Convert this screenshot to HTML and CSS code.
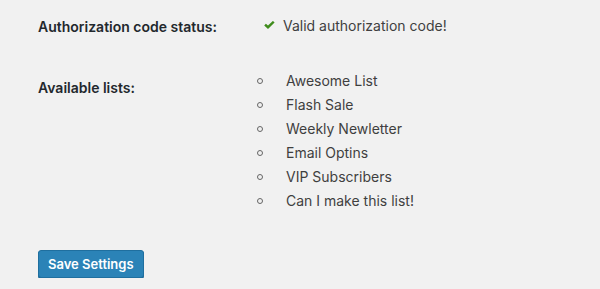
FILE: index.html
```html
<!DOCTYPE html>
<html lang="en">
<head>
<meta charset="utf-8">
<title>Settings</title>
<link rel="stylesheet" href="styles.css">
</head>
<body>
<div class="wrap">
  <div class="row row-status">
    <div class="label">Authorization code status:</div>
    <div class="value status">
      <svg class="check" width="11" height="8" viewBox="0 0 11 8" aria-hidden="true"><path d="M0.2 4.4 L1.9 2.7 L4 4.6 L8.9 -0.1 L10.6 1.6 L4 8 Z" fill="#3f8c1c"/></svg>
      <span>Valid authorization code!</span>
    </div>
  </div>
  <div class="row row-lists">
    <div class="label">Available lists:</div>
    <ul class="value lists">
      <li>Awesome List</li>
      <li>Flash Sale</li>
      <li>Weekly Newletter</li>
      <li>Email Optins</li>
      <li>VIP Subscribers</li>
      <li>Can I make this list!</li>
    </ul>
  </div>
  <div class="actions">
    <button class="button-primary" type="button">Save Settings</button>
  </div>
</div>
</body>
</html>
```

FILE: styles.css
```css
html, body {
  margin: 0;
  padding: 0;
  background: #f1f1f1;
}
body {
  font-family: Inter, "Noto Sans", "Liberation Sans", sans-serif;
  font-size: 14px;
  color: #3f3f3f;
}
.wrap {
  padding-left: 38px;
}
.row {
  display: grid;
  grid-template-columns: 226px 1fr;
  align-items: start;
}
.label {
  font-weight: 600;
  color: #23282d;
  line-height: 18px;
}
.row-status .label {
  padding-top: 18px;
}
.status {
  padding-top: 17px;
  display: flex;
  align-items: flex-start;
  line-height: 18px;
}
.check {
  display: block;
  margin-top: 4px;
  margin-right: 8px;
}
.row-lists .label {
  padding-top: 43px;
}
.lists {
  list-style: none;
  margin: 0 0 0 -7px;
  padding: 33px 0 0 0;
}
.lists li {
  display: flex;
  align-items: center;
  line-height: 24px;
}
.lists li::before {
  content: "";
  width: 4px;
  height: 4px;
  border: 1px solid #666;
  border-radius: 50%;
  margin-right: 23px;
  flex: none;
}
.actions {
  padding-top: 37px;
}
.button-primary {
  font-family: inherit;
  font-size: 13px;
  font-weight: 600;
  color: #fff;
  background: #2b83b7;
  border: 1px solid #1f6f9f;
  border-radius: 3px;
  box-shadow: 0 1px 0 #1d6894;
  height: 28px;
  line-height: 26px;
  padding: 0 9px 1px;
  margin: 0;
  cursor: pointer;
}
```
